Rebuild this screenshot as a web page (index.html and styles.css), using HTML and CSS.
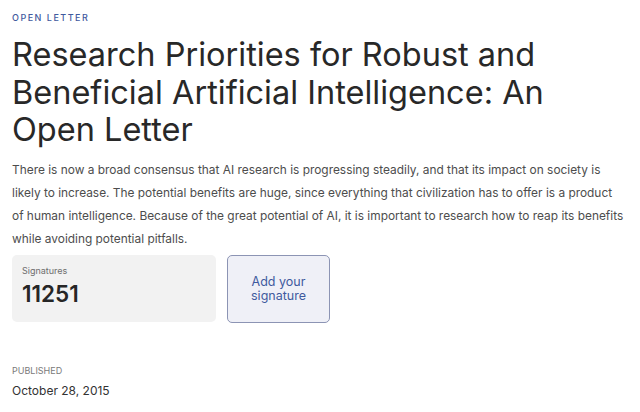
FILE: index.html
```html
<!DOCTYPE html>
<html lang="en">
<head>
<meta charset="utf-8">
<title>Open Letter</title>
<link rel="stylesheet" href="styles.css">
</head>
<body>
<main class="page">
  <div class="eyebrow">Open Letter</div>
  <h1 class="title">Research Priorities for Robust and Beneficial Artificial Intelligence: An Open Letter</h1>
  <p class="lead">There is now a broad consensus that AI research is progressing steadily, and that its impact on society is likely to increase. The potential benefits are huge, since everything that civilization has to offer is a product of human intelligence. Because of the great potential of AI, it is important to research how to reap its benefits while avoiding potential pitfalls.</p>
  <div class="actions">
    <div class="stat">
      <div class="stat-label">Signatures</div>
      <div class="stat-value">11251</div>
    </div>
    <button class="sign-btn" type="button">Add your<br>signature</button>
  </div>
  <div class="meta">
    <div class="meta-label">Published</div>
    <div class="meta-value">October 28, 2015</div>
  </div>
</main>
</body>
</html>
```
FILE: styles.css
```css
* { box-sizing: border-box; }
html, body { margin: 0; padding: 0; background: #ffffff; }
body {
  font-family: Inter, "Noto Sans", "Liberation Sans", sans-serif;
  color: #2b2b2b;
}
.page {
  padding: 12px 8px 0 12px;
}
.eyebrow {
  font-size: 9px;
  letter-spacing: 1.5px;
  text-transform: uppercase;
  color: #3f5a9e;
  font-weight: 500;
  line-height: 12px;
}
.title {
  margin: 12px 0 0 0;
  font-size: 32.5px;
  font-weight: 400;
  line-height: 37.5px;
  color: #282828;
  max-width: 616px;
}
.lead {
  margin: 9px 0 0 0;
  font-size: 11.9px;
  line-height: 23px;
  color: #4d4d4d;
  max-width: 613px;
}
.actions {
  display: flex;
  gap: 11px;
  margin-top: 5px;
}
.stat {
  width: 204px;
  height: 67px;
  background: #f2f2f2;
  border-radius: 5px;
  padding: 10px 10px;
}
.stat-label {
  font-size: 9px;
  color: #6e6e6e;
  line-height: 12px;
}
.stat-value {
  margin-top: 4px;
  font-size: 22.5px;
  font-weight: 600;
  color: #262626;
  line-height: 26px;
}
.sign-btn {
  width: 103px;
  height: 68px;
  background: #eff0f7;
  border: 1px solid #8c94b4;
  border-radius: 5px;
  font-family: inherit;
  font-size: 12.5px;
  line-height: 14px;
  color: #3f5a9e;
  padding: 0;
  cursor: pointer;
}
.meta {
  margin-top: 42px;
}
.meta-label {
  font-size: 9px;
  text-transform: uppercase;
  color: #7a7a7a;
  line-height: 12px;
}
.meta-value {
  margin-top: 5px;
  font-size: 12px;
  color: #333333;
  line-height: 18px;
}
```
